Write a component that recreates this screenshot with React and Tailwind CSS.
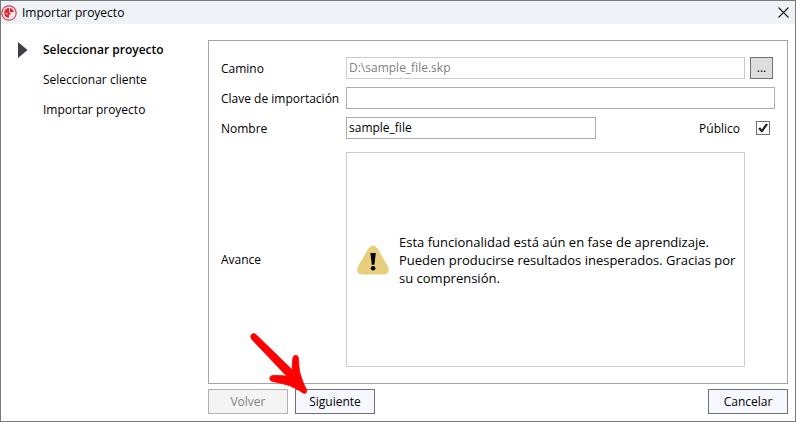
import { useState } from "react";

const STEPS = ["Seleccionar proyecto", "Seleccionar cliente", "Importar proyecto"];

function AppLogo() {
  return (
    <svg width="16" height="16" viewBox="0 0 16 16" aria-hidden="true">
      <circle cx="8" cy="8" r="7.2" fill="#fbeef0" stroke="#dc3a46" strokeWidth="1.2" />
      <path d="M8 3V7.6H9.6V9.6H8V12.8A4.9 4.9 0 0 1 3 8A5 5 0 0 1 8 3Z" fill="#dc2634" />
      <path d="M8.8 3Q12.2 3.8 12.8 7H8.8Z" fill="#dc2634" />
      <path d="M3 8.2H6.6L5.4 10.2" fill="none" stroke="#f3b4ba" strokeWidth=".7" />
    </svg>
  );
}

function WarningIcon() {
  return (
    <svg className="shrink-0" width="32" height="30" viewBox="0 0 32 30" aria-hidden="true">
      <path
        d="M11.4 3.6Q16 -2.8 20.6 3.6L31 21.4Q33.6 28.6 27 29.5H5Q-1.6 28.6 1 21.4Z"
        fill="#e8cd7d"
      />
      <path d="M13.4 8H18.8L17.4 19.8H14.8Z" fill="#000" />
      <circle cx="16.1" cy="23.3" r="2.3" fill="#000" />
    </svg>
  );
}

function RedArrow() {
  return (
    <svg
      className="absolute bottom-full left-0 -translate-x-11 translate-y-1.5 pointer-events-none overflow-visible"
      width="60"
      height="62"
      viewBox="0 0 60 62"
      aria-hidden="true"
    >
      <path
        d="M.5 6Q-1 2.9 .8 1.3Q2.8 -.4 5.2 1.8L41.2 36.8Q41.2 29 42 24.6Q42.8 22.3 44.9 22.3Q47 22.5 47.4 24.8Q47.7 32 48.7 39Q51 48.6 55.8 57.4Q56.2 60.6 52.6 60.2Q45.6 55.4 38.3 52.5Q30 50 21.9 48.6Q18.7 47.8 18.7 45.5Q19 42.8 22 42.5Q28.6 42.3 35.6 43Z"
        fill="#fe0000"
        stroke="#fe0000"
        strokeWidth=".8"
        strokeLinejoin="round"
      />
    </svg>
  );
}

export default function App() {
  const [key, setKey] = useState("");
  const [name, setName] = useState("sample_file");
  const [isPublic, setIsPublic] = useState(true);

  const btn = "w-20 h-[25px] border text-xs";
  const rowLabel = "w-[125px] shrink-0 pt-0.5";

  return (
    <div className="min-h-screen flex flex-col border border-[#7a7a7a] bg-white text-black text-xs font-['Open_Sans','Noto_Sans',sans-serif]">

      {/* TITLE BAR */}
      <header className="flex items-center h-[23px] bg-[#eff3f7] pr-1.5">
        <AppLogo />
        <h1 className="ml-[5px] flex-1">Importar proyecto</h1>
        <button type="button" aria-label="Cerrar">
          <svg width="11" height="11" viewBox="0 0 11 11" fill="none" stroke="#1a1a1a" strokeWidth="1.1">
            <path d="M.5.5L10.5 10.5M10.5.5L.5 10.5" />
          </svg>
        </button>
      </header>

      <div className="flex-1 flex pt-4 pr-[7px] pb-[7px]">

        {/* STEPS */}
        <nav className="w-[207px] shrink-0 pl-[17px]">
          <ol>
            {STEPS.map((step, i) => (
              <li key={step} className={`flex items-center h-5 mb-2.5 ${i === 0 ? "font-semibold" : ""}`}>
                <span className="w-[25px]">
                  {i === 0 && (
                    <svg width="10" height="16" viewBox="0 0 10 16" aria-hidden="true">
                      <path d="M0 0L9.5 8L0 16Z" fill="#3f3f46" />
                    </svg>
                  )}
                </span>
                {step}
              </li>
            ))}
          </ol>
        </nav>

        <main className="flex-1 flex flex-col">

          {/* FORM */}
          <form className="flex-1 flex flex-col gap-2 border border-[#a5a5a5] pt-4 pb-4 pl-3 pr-3">
            <div className="flex items-center">
              <label htmlFor="path" className={rowLabel}>Camino</label>
              <input
                id="path"
                disabled
                value="D:\sample_file.skp"
                className="flex-1 h-[22px] border border-[#cccccc] bg-white px-0.5 pb-0.5 text-[#808080]"
              />
              <button type="button" aria-label="Examinar" className="ml-[5px] mr-0.5 w-[23px] h-[22px] border border-[#707070] bg-[#dddddd]">
                ...
              </button>
            </div>

            <div className="flex items-center">
              <label htmlFor="key" className={rowLabel}>Clave de importación</label>
              <input
                id="key"
                value={key}
                onChange={(e) => setKey(e.target.value)}
                className="flex-1 h-[22px] border border-[#abadb3] px-0.5 pb-0.5"
              />
            </div>

            <div className="flex items-center">
              <label htmlFor="name" className={rowLabel}>Nombre</label>
              <input
                id="name"
                value={name}
                onChange={(e) => setName(e.target.value)}
                className="w-[250px] h-[22px] border border-[#abadb3] px-0.5 pb-0.5"
              />
              <label htmlFor="public" className="ml-auto mr-4 pt-0.5">Público</label>
              <span className="relative flex mr-[5px]">
                <input
                  id="public"
                  type="checkbox"
                  checked={isPublic}
                  onChange={(e) => setIsPublic(e.target.checked)}
                  className="peer appearance-none w-3.5 h-3.5 border border-[#707070] bg-white"
                />
                <svg
                  className="absolute inset-0 pointer-events-none hidden peer-checked:block"
                  width="14"
                  height="14"
                  viewBox="0 0 14 14"
                  aria-hidden="true"
                >
                  <path d="M2.2 7.4L4.2 6.2L5.8 8.4L10 2.6L12 3.4L6.4 11.2H5.2Z" fill="#212121" />
                </svg>
              </span>
            </div>

            <div className="flex-1 flex items-stretch mt-[5px]">
              <span className="w-[125px] shrink-0 self-center">Avance</span>
              <div className="flex-1 mr-[30px] flex items-center gap-2.5 border border-[#cccccc] pl-2.5 pr-1" role="status">
                <WarningIcon />
                <p className="text-[13px] leading-[18px]">
                  Esta funcionalidad está aún en fase de aprendizaje. Pueden producirse resultados inesperados. Gracias por su comprensión.
                </p>
              </div>
            </div>
          </form>

          {/* BUTTONS */}
          <footer className="flex gap-[7px] mt-[5px]">
            <button type="button" disabled className={`${btn} border-[#adb2b5] bg-[#f4f4f4] text-[#838383]`}>
              Volver
            </button>
            <div className="relative">
              <button type="button" className={`${btn} border-[#707070] bg-[#f7f8ff]`}>
                Siguiente
              </button>
              <RedArrow />
            </div>
            <button type="button" className={`${btn} ml-auto border-[#707070] bg-[#f7f8ff]`}>
              Cancelar
            </button>
          </footer>
        </main>
      </div>
    </div>
  );
}
